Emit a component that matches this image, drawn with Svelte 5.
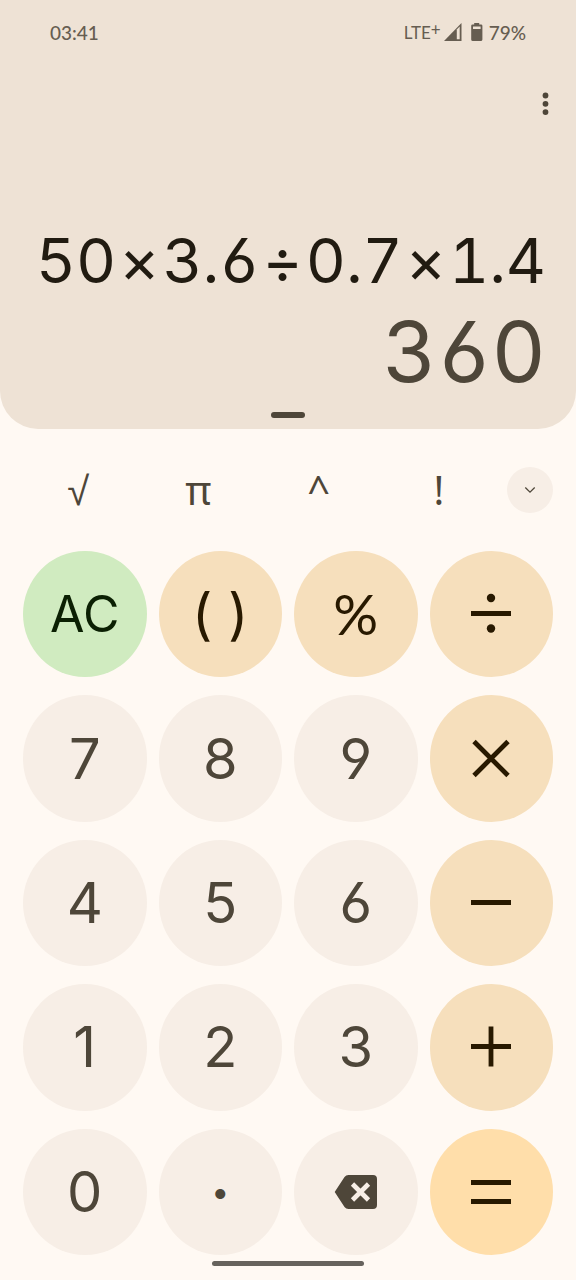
<script>
  const icons = {
    '÷': 'M22 33.5h40',
    '×': 'M25 16.5l34 34M59 16.5l-34 34',
    '−': 'M22 33.5h40',
    '+': 'M22 33.5h40M42 13.5v40',
    '=': 'M22 24.5h40M22 43.5h40'
  };

  const keys = [
    { value: 'AC', kind: 'clear', label: 'All clear' },
    { value: '( )', kind: 'operator', label: 'Parentheses' },
    { value: '%', kind: 'operator percent', label: 'Percent' },
    { value: '÷', kind: 'operator', label: 'Divide' },
    { value: '7', kind: 'digit' },
    { value: '8', kind: 'digit' },
    { value: '9', kind: 'digit' },
    { value: '×', kind: 'operator', label: 'Multiply' },
    { value: '4', kind: 'digit' },
    { value: '5', kind: 'digit' },
    { value: '6', kind: 'digit' },
    { value: '−', kind: 'operator', label: 'Minus' },
    { value: '1', kind: 'digit' },
    { value: '2', kind: 'digit' },
    { value: '3', kind: 'digit' },
    { value: '+', kind: 'operator', label: 'Plus' },
    { value: '0', kind: 'digit' },
    { value: '.', kind: 'digit', label: 'Point' },
    { value: 'del', kind: 'digit', label: 'Delete' },
    { value: '=', kind: 'equals', label: 'Equals' }
  ];

  const functions = [
    { value: '√', label: 'Square root' },
    { value: 'π', label: 'Pi' },
    { value: '^', label: 'Power' },
    { value: '!', label: 'Factorial' }
  ];

  let expression = $state('50×3.6÷0.7×1.4');
  let tokens = $derived(expression.match(/[\d.]+|[^\d.]/g) ?? []);
  let result = $derived(evaluate(expression));

  function factorial(n) {
    return n > 1 ? n * factorial(n - 1) : 1;
  }

  function evaluate(text) {
    const source = text
      .replace(/(\d+)!/g, 'factorial($1)')
      .replace(/√([\d.]+|π)/g, '(($1)**0.5)')
      .replaceAll('×', '*')
      .replaceAll('÷', '/')
      .replaceAll('−', '-')
      .replaceAll('^', '**')
      .replaceAll('%', '/100')
      .replaceAll('π', '(Math.PI)');
    try {
      const value = new Function('factorial', `return ${source}`)(factorial);
      return Number.isFinite(value) ? String(Number(value.toPrecision(10))) : '';
    } catch {
      return '';
    }
  }

  function press(value) {
    if (value === 'AC') {
      expression = '';
    } else if (value === 'del') {
      expression = expression.slice(0, -1);
    } else if (value === '=') {
      expression = result || expression;
    } else if (value === '( )') {
      const open = expression.split('(').length > expression.split(')').length;
      expression += open && /[\d)π]$/.test(expression) ? ')' : '(';
    } else {
      expression += value;
    }
  }
</script>

<div class="app">
  <section class="display">
    <div class="status-bar">
      <span>03:41</span>
      <div class="status-icons">
        <span class="network">LTE<sup>+</sup></span>
        <svg class="signal" viewBox="0 0 18 18" aria-hidden="true">
          <path d="M17.5 0v18H0z" fill="currentColor" />
          <path d="M12.8 6.5l2.9-3v12.7h-2.9z" fill="#eee2d5" />
        </svg>
        <svg class="battery" viewBox="0 0 12 18" aria-hidden="true">
          <path d="M3.2 0h5v1.4H10A1.4 1.4 0 0 1 11.4 2.8v13.6A1.6 1.6 0 0 1 9.8 18H1.8A1.6 1.6 0 0 1 .2 16.4V2.8A1.4 1.4 0 0 1 1.6 1.4h1.6z" fill="currentColor" />
          <path d="M2 3.5h7.6V6H2z" fill="#eee2d5" />
        </svg>
        <span>79%</span>
      </div>
    </div>

    <div class="toolbar">
      <button class="menu" aria-label="More options">
        <svg viewBox="0 0 24 24" fill="currentColor">
          <circle cx="12.5" cy="3.5" r="2.9" />
          <circle cx="12.5" cy="11.8" r="2.9" />
          <circle cx="12.5" cy="20.1" r="2.9" />
        </svg>
      </button>
    </div>

    <div class="expression">
      {#each tokens as token}<span>{token}</span>{/each}
    </div>
    <output class="result">{result}</output>
    <div class="handle"></div>
  </section>

  <div class="functions">
    {#each functions as fn}
      <button class="function" aria-label={fn.label} onclick={() => press(fn.value)}>{fn.value}</button>
    {/each}
    <button class="expand" aria-label="More functions">
      <svg viewBox="0 0 24 24" fill="none" stroke="currentColor">
        <path stroke-width="1.3" d="M7.3 9.5l4.7 4.6 4.7-4.6" />
      </svg>
    </button>
  </div>

  <div class="keypad">
    {#each keys as key}
      <button class="key {key.kind}" aria-label={key.label} onclick={() => press(key.value)}>
        {#if icons[key.value]}
          <svg class="symbol" viewBox="0 0 84 68" fill="none" stroke="currentColor">
            <path stroke-width="4.8" d={icons[key.value]} />
            {#if key.value === '÷'}
              <circle cx="42" cy="18" r="4.2" fill="currentColor" stroke="none" />
              <circle cx="42" cy="48.5" r="4.2" fill="currentColor" stroke="none" />
            {/if}
          </svg>
        {:else if key.value === 'del'}
          <svg class="delete" viewBox="0 0 44 34">
            <path d="M14.5 0H39a4 4 0 0 1 4 4v26a4 4 0 0 1-4 4H14.5a5 5 0 0 1-4-2L.7 17 10.5 2a5 5 0 0 1 4-2z" fill="currentColor" />
            <path d="M18.5 9l16 16M34.5 9l-16 16" stroke="#f7eee6" stroke-width="4.6" />
          </svg>
        {:else if key.value === '.'}
          <span class="point">•</span>
        {:else}
          {key.value}
        {/if}
      </button>
    {/each}
  </div>

  <div class="nav-bar">
    <div class="home"></div>
  </div>
</div>

<style>
  :global(body) {
    margin: 0;
    background: #fff9f3;
  }

  .app {
    min-height: 100vh;
    display: flex;
    flex-direction: column;
    background: #fff9f3;
    color: #4e4639;
    font-family: Inter, Roboto, sans-serif;
    font-feature-settings: 'cv03', 'cv04';
  }

  button {
    border: none;
    padding: 0;
    margin: 0;
    background: transparent;
    color: inherit;
    font: inherit;
    font-feature-settings: inherit;
    cursor: pointer;
    display: flex;
    align-items: center;
    justify-content: center;
  }

  /* Display */
  .display {
    display: flex;
    flex-direction: column;
    background: #eee2d5;
    border-radius: 0 0 38px 38px;
    padding-bottom: 11px;
  }

  .status-bar {
    height: 64px;
    padding: 0 50px;
    display: flex;
    align-items: center;
    justify-content: space-between;
    font-family: Lato, sans-serif;
    font-size: 19px;
    font-weight: 500;
    color: #665d51;
  }

  .status-icons {
    display: flex;
    align-items: center;
  }

  .network {
    font-size: 17px;
    font-weight: 400;
  }

  .network sup {
    font-size: 17px;
    line-height: 0;
    vertical-align: 3px;
  }

  .signal {
    width: 18px;
    height: 18px;
    margin: 0 9px 0 3px;
  }

  .battery {
    width: 12px;
    height: 18px;
    margin-right: 6px;
  }

  .toolbar {
    height: 80px;
    margin-bottom: 75px;
    padding-right: 7px;
    display: flex;
    align-items: center;
    justify-content: flex-end;
  }

  .menu {
    width: 48px;
    height: 48px;
  }

  .menu svg {
    width: 24px;
    height: 24px;
  }

  .expression,
  .result {
    padding: 0 30px;
    font-feature-settings: 'cv03', 'cv04', 'tnum';
  }

  .expression {
    min-height: 84px;
    display: flex;
    justify-content: flex-end;
    gap: 3px;
    font-size: 62px;
    line-height: 84px;
    color: #211b11;
  }

  .result {
    min-height: 97px;
    text-align: right;
    font-size: 84px;
    line-height: 97px;
  }

  .handle {
    width: 34px;
    height: 6px;
    margin: 12px auto 0;
    border-radius: 3px;
    background: #4e4639;
  }

  /* Functions row */
  .functions {
    display: flex;
    align-items: center;
    padding: 38px 23px 38px 18px;
  }

  .function {
    flex: 1;
    height: 46px;
    font-family: 'Noto Sans', sans-serif;
    font-size: 40px;
    line-height: 46px;
  }

  .expand {
    width: 46px;
    height: 46px;
    margin-left: 8px;
    border-radius: 50%;
    background: #f7eee6;
  }

  .expand svg {
    width: 24px;
    height: 24px;
  }

  /* Keypad */
  .keypad {
    flex: 1;
    display: grid;
    grid-template-columns: repeat(4, 1fr);
    grid-auto-rows: minmax(96px, 1fr);
    gap: 18px 12px;
    padding: 0 23px;
  }

  .key {
    border-radius: 50%;
    font-size: 56px;
    line-height: 64px;
  }

  .digit {
    background: #f7eee6;
  }

  .operator {
    background: #f6dfbc;
    color: #281900;
  }

  .percent {
    font-family: Lato, sans-serif;
  }

  .equals {
    background: #ffdeaa;
    color: #281900;
  }

  .clear {
    background: #d0ebc0;
    color: #0b2003;
    font-size: 50px;
  }

  .symbol {
    width: 84px;
    height: 68px;
  }

  .delete {
    width: 44px;
    height: 34px;
  }

  .point {
    font-size: 32px;
  }

  /* Navigation */
  .nav-bar {
    height: 19px;
    padding-top: 6px;
  }

  .home {
    width: 152px;
    height: 5px;
    margin: 0 auto;
    border-radius: 3px;
    background: #67635d;
  }
</style>
